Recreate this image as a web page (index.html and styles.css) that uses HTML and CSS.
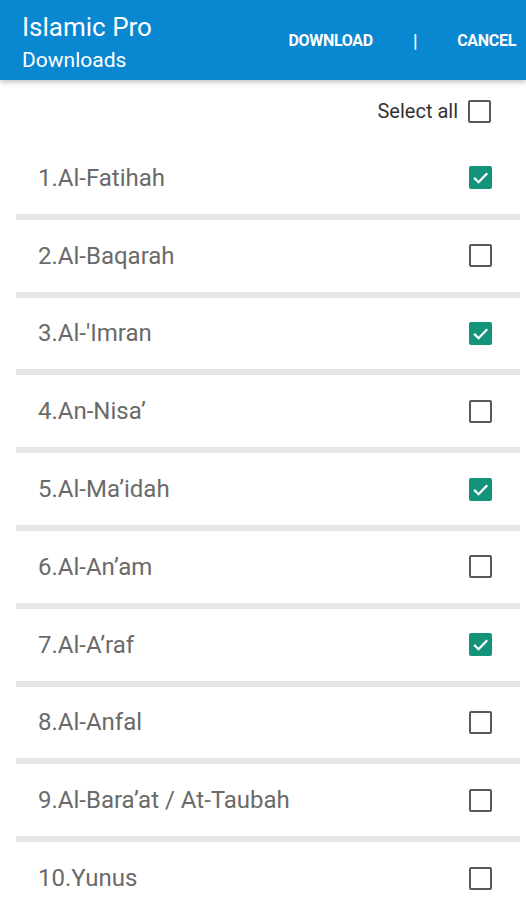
FILE: index.html
```html
<!DOCTYPE html>
<html lang="en">
<head>
  <meta charset="UTF-8" />
  <meta name="viewport" content="width=device-width, initial-scale=1.0"/>
  <title>Downloads - Islamic Pro</title>
  <link rel="stylesheet" href="styles.css">
</head>
<body>
  <header class="app-bar">
    <div class="titles">
      <div class="app-title">Islamic Pro</div>
      <div class="app-subtitle">Downloads</div>
    </div>
    <div class="actions">
      <span class="action">DOWNLOAD</span>
      <span class="sep">|</span>
      <span class="action">CANCEL</span>
    </div>
  </header>

  <div class="select-all">
    <span>Select all</span>
    <span class="box"></span>
  </div>

  <ul class="surah-list">
    <li class="surah"><span>1.Al-Fatihah</span><span class="box checked"><svg viewBox="0 0 24 24"><path d="M4 12.5l5.5 5.5L20.5 6.5"/></svg></span></li>
    <li class="surah"><span>2.Al-Baqarah</span><span class="box"></span></li>
    <li class="surah"><span>3.Al-'Imran</span><span class="box checked"><svg viewBox="0 0 24 24"><path d="M4 12.5l5.5 5.5L20.5 6.5"/></svg></span></li>
    <li class="surah"><span>4.An-Nisa’</span><span class="box"></span></li>
    <li class="surah"><span>5.Al-Ma’idah</span><span class="box checked"><svg viewBox="0 0 24 24"><path d="M4 12.5l5.5 5.5L20.5 6.5"/></svg></span></li>
    <li class="surah"><span>6.Al-An’am</span><span class="box"></span></li>
    <li class="surah"><span>7.Al-A’raf</span><span class="box checked"><svg viewBox="0 0 24 24"><path d="M4 12.5l5.5 5.5L20.5 6.5"/></svg></span></li>
    <li class="surah"><span>8.Al-Anfal</span><span class="box"></span></li>
    <li class="surah"><span>9.Al-Bara’at / At-Taubah</span><span class="box"></span></li>
    <li class="surah"><span>10.Yunus</span><span class="box"></span></li>
  </ul>
</body>
</html>
```

FILE: styles.css
```css
body {
  margin: 0;
  font-family: Roboto, "Liberation Sans", sans-serif;
  background: #fff;
}

.app-bar {
  height: 80px;
  box-sizing: border-box;
  background: #0a87d1;
  color: #fff;
  display: flex;
  justify-content: space-between;
  align-items: center;
  padding: 0 10px 0 22px;
  box-shadow: 0 2px 5px rgba(0, 0, 0, 0.25);
  position: relative;
}

.titles {
  align-self: flex-start;
  padding-top: 12px;
}

.app-title {
  font-size: 26px;
  line-height: 30px;
}

.app-subtitle {
  font-size: 21px;
  line-height: 25px;
  margin-top: 6px;
}

.actions {
  display: flex;
  align-items: center;
  font-size: 16px;
  font-weight: bold;
  letter-spacing: -0.3px;
}

.sep {
  font-size: 18px;
  margin: 0 40px;
}

.select-all {
  display: flex;
  justify-content: flex-end;
  align-items: center;
  gap: 10px;
  padding: 19px 35px 0 0;
  height: 24px;
  font-size: 20px;
  color: #333;
}

.surah-list {
  list-style: none;
  margin: 19px 6px 0 16px;
  padding: 0;
}

.surah {
  height: 71.8px;
  display: flex;
  justify-content: space-between;
  align-items: center;
  padding: 0 28px 0 22px;
  border-bottom: 6px solid #e6e6e6;
  font-size: 24px;
  color: #6a6a6a;
}

.box {
  width: 23px;
  height: 23px;
  box-sizing: border-box;
  border: 2px solid #585858;
  border-radius: 2px;
  display: flex;
}

.box.checked {
  background: #14937b;
  border-color: #14937b;
}

.box svg {
  width: 100%;
  height: 100%;
  fill: none;
  stroke: #fff;
  stroke-width: 2.8;
}
```
